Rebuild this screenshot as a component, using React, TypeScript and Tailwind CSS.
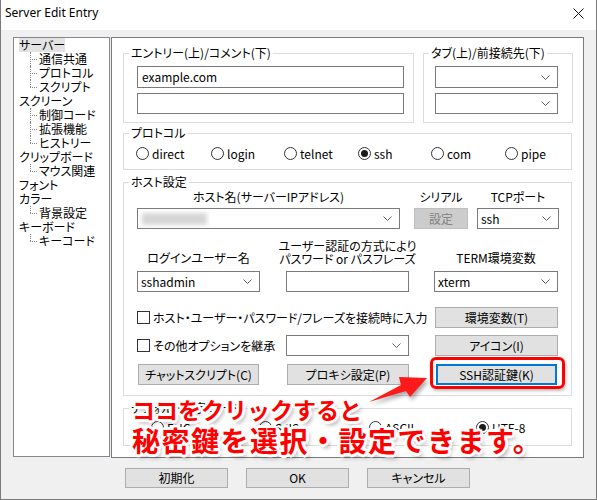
import React from "react";

const jp = "font-['Noto_Sans_CJK_JP','Noto_Sans',sans-serif] [font-feature-settings:'palt']";

type Node = { label: string; children: string[]; selected?: boolean };

const tree: Node[] = [
  { label: "サーバー", children: ["通信共通", "プロトコル", "スクリプト"], selected: true },
  { label: "スクリーン", children: ["制御コード", "拡張機能", "ヒストリー"] },
  { label: "クリップボード", children: ["マウス関連"] },
  { label: "フォント", children: [] },
  { label: "カラー", children: ["背景設定"] },
  { label: "キーボード", children: ["キーコード"] },
];

function Chevron() {
  return (
    <svg width="9" height="5" viewBox="0 0 9 5" className="shrink-0">
      <polyline points="0.5,0.5 4.5,4.5 8.5,0.5" fill="none" stroke="#606060" strokeWidth="1" />
    </svg>
  );
}

function Combo({ w, text, h = "h-[21px]" }: { w: string; text?: string; h?: string }) {
  return (
    <div className={`flex ${h} ${w} items-center justify-between border border-[#7a7a7a] bg-white pl-[3px] pr-[7px]`}>
      <span className="leading-none">{text}</span>
      <Chevron />
    </div>
  );
}

function Input({ w, text, h = "h-[22px]" }: { w: string; text?: string; h?: string }) {
  return (
    <div className={`flex ${h} ${w} items-center border border-[#7a7a7a] bg-white pl-[4px]`}>
      <span className="leading-none">{text}</span>
    </div>
  );
}

function Button({ w, label, h = "h-[21px]", focus }: { w: string; label: string; h?: string; focus?: boolean }) {
  return (
    <div
      className={`flex ${h} ${w} items-center justify-center ${
        focus ? "border-2 border-[#0078d7]" : "border border-[#adadad]"
      } bg-[#e1e1e1] leading-none text-black`}
    >
      {label}
    </div>
  );
}

function Radio({ label, checked, w }: { label: string; checked?: boolean; w: string }) {
  return (
    <div className={`flex ${w} items-center gap-[3px]`}>
      <span className="flex h-[13px] w-[13px] shrink-0 items-center justify-center rounded-full border border-[#333] bg-white">
        {checked && <span className="h-[7px] w-[7px] rounded-full bg-[#1a1a1a]" />}
      </span>
      <span className="leading-none">{label}</span>
    </div>
  );
}

function Check({ label }: { label: string }) {
  return (
    <div className="flex items-center gap-[3px]">
      <span className="h-[13px] w-[13px] shrink-0 border border-[#333] bg-white" />
      <span className="leading-none">{label}</span>
    </div>
  );
}

function Group({ label, className, children }: { label: string; className: string; children?: React.ReactNode }) {
  return (
    <div className={`relative border border-[#dcdcdc] ${className}`}>
      <span className="absolute -top-[8px] left-[5px] bg-white px-[2px] leading-[14px]">{label}</span>
      {children}
    </div>
  );
}

export default function App() {
  return (
    <div className={`relative flex h-[500px] w-[597px] flex-col overflow-hidden whitespace-nowrap border-x border-b border-[#7a7a7a] bg-[#f0f0f0] text-[12px] text-black ${jp}`}>
      {/* title bar */}
      <div className="flex h-[30px] shrink-0 items-center justify-between bg-white pl-[4px] pr-[12px]">
        <span className="mb-[4px] font-['Noto_Sans',sans-serif] text-[12px]">Server Edit Entry</span>
        <svg width="11" height="11" viewBox="0 0 11 11" className="mb-[4px]">
          <path d="M0.5 0.5 L10.5 10.5 M10.5 0.5 L0.5 10.5" stroke="#111" strokeWidth="1" />
        </svg>
      </div>

      <div className="mt-[7px] flex gap-[1px] pl-[12px]">
        {/* tree */}
        <div className="h-[420px] w-[97px] border border-[#828790] bg-white pl-[5px]">
          {tree.map((n) => (
            <div key={n.label}>
              <div className="flex h-[14px] items-center">
                <span className={`leading-[14px] ${n.selected ? "bg-[#e3e3e3]" : ""}`}>{n.label}</span>
              </div>
              {n.children.map((c, i) => (
                <div key={c} className="flex h-[14px] items-center pl-[11px]">
                  <span className="relative h-full w-[9px] shrink-0">
                    <span
                      className={`absolute left-0 top-0 border-l border-dotted border-[#8a8a8a] ${
                        i === n.children.length - 1 ? "h-[7px]" : "h-full"
                      }`}
                    />
                    <span className="absolute left-0 top-[7px] w-[7px] border-t border-dotted border-[#8a8a8a]" />
                  </span>
                  <span className="leading-[14px]">{c}</span>
                </div>
              ))}
            </div>
          ))}
        </div>

        {/* content panel */}
        <div className="flex h-[421px] w-[473px] flex-col border border-[#7a7a7a] bg-white pl-[11px] pt-[15px]">
          <div className="flex gap-[9px]">
            <Group label="エントリー(上)/コメント(下)" className="flex h-[70px] w-[291px] flex-col gap-[5px] pl-[13px] pt-[12px]">
              <Input w="w-[267px]" text="example.com" />
              <Input w="w-[267px]" h="h-[21px]" />
            </Group>
            <Group label="タブ(上)/前接続先(下)" className="flex h-[70px] w-[150px] flex-col gap-[5px] pl-[11px] pt-[12px]">
              <Combo w="w-[123px]" h="h-[22px]" />
              <Combo w="w-[123px]" />
            </Group>
          </div>

          <Group label="プロトコル" className="mt-[10px] flex h-[37px] w-[449px] items-start pl-[12px] pt-[13px]">
            <Radio w="w-[75px]" label="direct" />
            <Radio w="w-[73px]" label="login" />
            <Radio w="w-[74px]" label="telnet" />
            <Radio w="w-[73px]" label="ssh" checked />
            <Radio w="w-[74px]" label="com" />
            <Radio w="w-[60px]" label="pipe" />
          </Group>

          <Group label="ホスト設定" className="mt-[12px] flex h-[214px] w-[449px] flex-col pl-[13px] pt-[7px]">
            <div className="flex items-end">
              <div className="flex w-[263px] flex-col items-center gap-[4px]">
                <span className="leading-[14px]">ホスト名(サーバーIPアドレス)</span>
                <div className="flex h-[21px] w-full items-center justify-between border border-[#7a7a7a] bg-white pl-[4px] pr-[7px]">
                  <span className="h-[12px] w-[65px] bg-[#d6d6d6] blur-[2px]" />
                  <Chevron />
                </div>
              </div>
              <div className="ml-[14px] flex w-[54px] flex-col items-center gap-[4px]">
                <span className="leading-[14px]">シリアル</span>
                <div className="flex h-[21px] w-full items-center justify-center border border-[#bfbfbf] bg-[#cccccc] leading-none text-[#838383]">
                  設定
                </div>
              </div>
              <div className="ml-[9px] flex w-[82px] flex-col items-center gap-[4px]">
                <span className="leading-[14px]">TCPポート</span>
                <Combo w="w-full" text="ssh" />
              </div>
            </div>

            <div className="mt-[8px] flex">
              <div className="flex w-[123px] flex-col items-center">
                <div className="flex h-[28px] items-end leading-[14px]">ログインユーザー名</div>
                <div className="mt-[6px] w-full">
                  <Combo w="w-full" text="sshadmin" />
                </div>
              </div>
              <div className="ml-[26px] flex w-[123px] flex-col items-center">
                <div className="flex h-[28px] flex-col items-center justify-end leading-[13px]">
                  <span>ユーザー認証の方式により</span>
                  <span>パスワード or パスフレーズ</span>
                </div>
                <div className="mt-[6px] w-full">
                  <Input w="w-full" h="h-[21px]" />
                </div>
              </div>
              <div className="ml-[25px] flex w-[124px] flex-col items-center">
                <div className="flex h-[28px] items-end leading-[14px]">TERM環境変数</div>
                <div className="mt-[6px] w-full">
                  <Combo w="w-full" text="xterm" />
                </div>
              </div>
            </div>

            <div className="mt-[15px] flex h-[21px] items-center">
              <div className="w-[298px]">
                <Check label="ホスト・ユーザー・パスワード/フレーズを接続時に入力" />
              </div>
              <Button w="w-[123px]" label="環境変数(T)" />
            </div>

            <div className="mt-[7px] flex h-[21px] items-center">
              <div className="w-[149px]">
                <Check label="その他オプションを継承" />
              </div>
              <Combo w="w-[123px]" />
              <div className="ml-[26px]">
                <Button w="w-[123px]" label="アイコン(I)" />
              </div>
            </div>

            <div className="mt-[8px] flex h-[21px] items-center pl-[1px]">
              <Button w="w-[121px]" label="チャットスクリプト(C)" />
              <div className="ml-[28px]">
                <Button w="w-[122px]" label="プロキシ設定(P)" />
              </div>
              <div className="ml-[27px]">
                <Button w="w-[121px]" label="SSH認証鍵(K)" focus />
              </div>
            </div>
          </Group>

          <Group label="デフォルト漢字コード" className="mt-[12px] flex h-[38px] w-[449px] items-start pl-[27px] pt-[12px]">
            <Radio w="w-[108px]" label="EUC" />
            <Radio w="w-[110px]" label="SJIS" />
            <Radio w="w-[107px]" label="ASCII" />
            <Radio w="w-[70px]" label="UTF-8" checked />
          </Group>
        </div>
      </div>

      {/* bottom buttons */}
      <div className="mt-[10px] flex gap-[18px] pl-[124px]">
        <Button w="w-[103px]" h="h-[20px]" label="初期化" />
        <Button w="w-[103px]" h="h-[20px]" label="OK" />
        <Button w="w-[103px]" h="h-[20px]" label="キャンセル" />
      </div>

      {/* annotation overlay */}
      <div className="pointer-events-none absolute left-[429px] top-[357px] h-[32px] w-[135px] rounded-[6px] border-[3px] border-[#ff0000] shadow-[1px_2px_3px_rgba(0,0,0,0.25)]" />
      <svg
        className="pointer-events-none absolute left-[360px] top-[360px] drop-shadow-[2px_3px_2px_rgba(0,0,0,0.35)]"
        width="75"
        height="50"
        viewBox="0 0 75 50"
      >
        <polygon points="8,42 40,25 38,17 66,18 49,37 45,31" fill="#ff1a1a" />
      </svg>
      <div className="pointer-events-none absolute left-[131px] top-[398px] font-['Noto_Sans_CJK_JP',sans-serif] font-bold text-[#ff0000] [font-feature-settings:normal] [text-shadow:3px_0_0_#fff,-3px_0_0_#fff,0_3px_0_#fff,0_-3px_0_#fff,2px_2px_0_#fff,-2px_2px_0_#fff,2px_-2px_0_#fff,-2px_-2px_0_#fff,3px_4px_4px_rgba(0,0,0,0.35)]">
        <div className="text-[23px] leading-[23px]">ココをクリックすると</div>
        <div className="mt-[5px] text-[28px] leading-[28px] tracking-[1.5px]">秘密鍵を選択・設定できます。</div>
      </div>
    </div>
  );
}
